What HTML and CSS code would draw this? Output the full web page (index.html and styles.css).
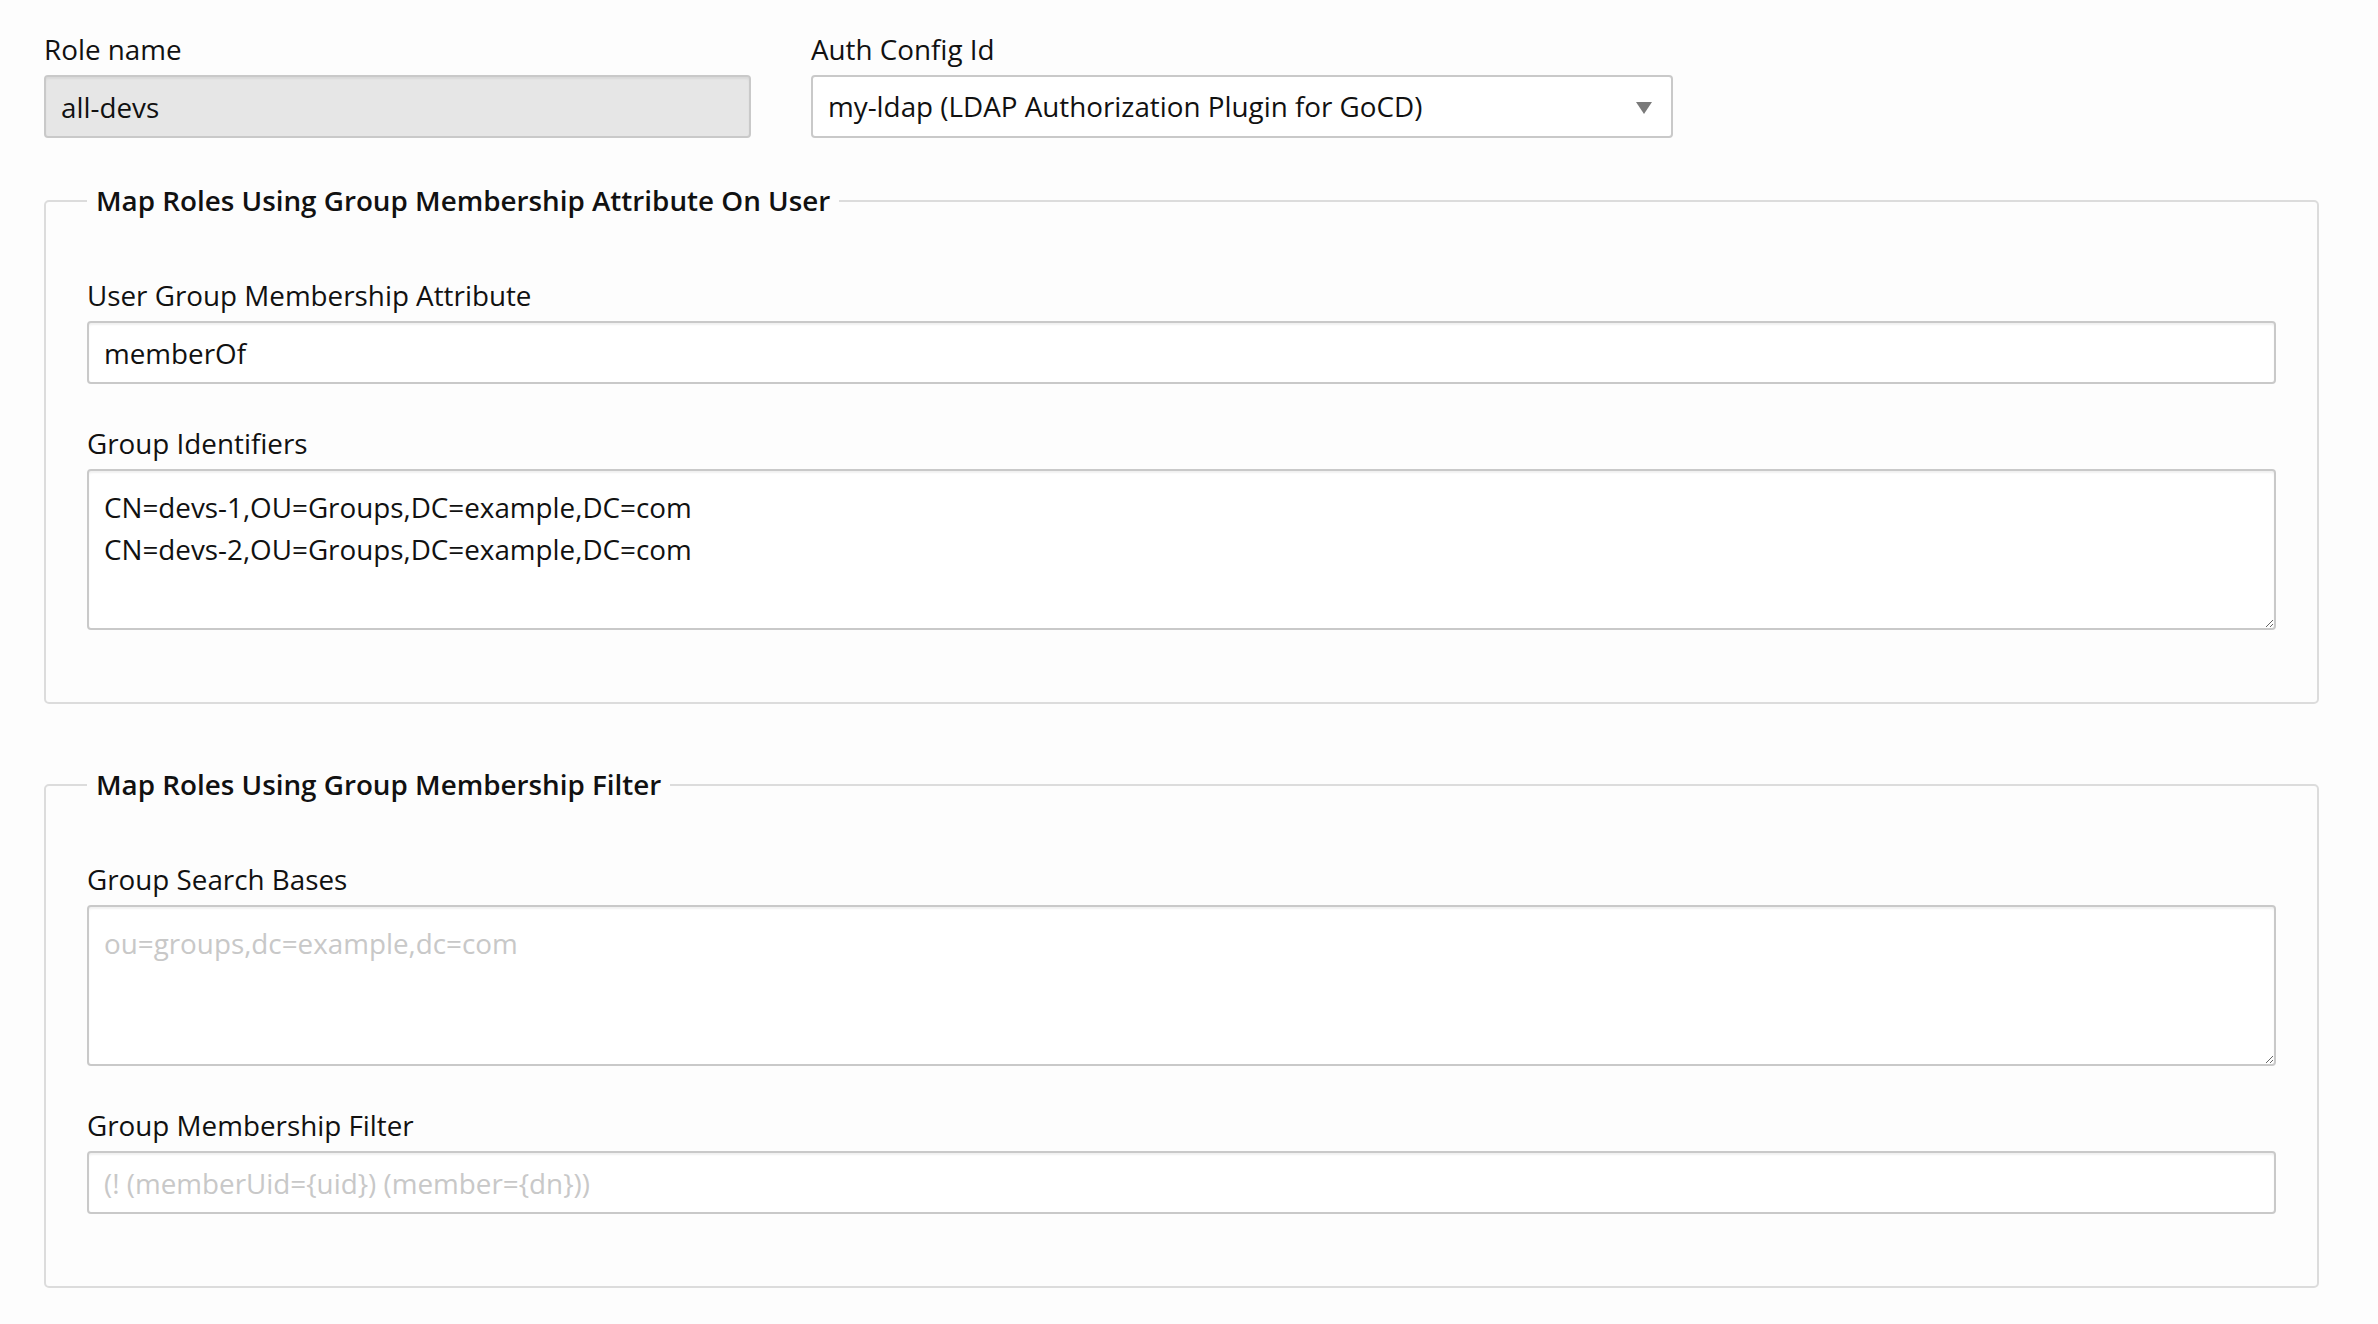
FILE: index.html
```html
<!DOCTYPE html>
<html>
<head>
<meta charset="utf-8">
<link rel="stylesheet" href="styles.css">
</head>
<body>
<div class="page">
  <div class="top-row">
    <div class="form-group col-role">
      <label class="lbl">Role name</label>
      <input class="ctl ctl-disabled" type="text" value="all-devs" disabled>
    </div>
    <div class="form-group col-auth">
      <label class="lbl">Auth Config Id</label>
      <div class="select">
        <span class="select-text">my-ldap (LDAP Authorization Plugin for GoCD)</span>
        <span class="select-arrow"></span>
      </div>
    </div>
  </div>

  <fieldset class="box">
    <legend class="box-title">Map Roles Using Group Membership Attribute On User</legend>
    <div class="form-group">
      <label class="lbl">User Group Membership Attribute</label>
      <input class="ctl" type="text" value="memberOf">
    </div>
    <div class="form-group last">
      <label class="lbl">Group Identifiers</label>
      <textarea class="ctl area">CN=devs-1,OU=Groups,DC=example,DC=com
CN=devs-2,OU=Groups,DC=example,DC=com</textarea>
    </div>
  </fieldset>

  <fieldset class="box second">
    <legend class="box-title">Map Roles Using Group Membership Filter</legend>
    <div class="form-group">
      <label class="lbl">Group Search Bases</label>
      <textarea class="ctl area" placeholder="ou=groups,dc=example,dc=com"></textarea>
    </div>
    <div class="form-group last">
      <label class="lbl">Group Membership Filter</label>
      <input class="ctl" type="text" placeholder="(! (memberUid={uid}) (member={dn}))">
    </div>
  </fieldset>
</div>
</body>
</html>
```

FILE: styles.css
```css
* { box-sizing: border-box; }
html, body {
  margin: 0;
  padding: 0;
  background: #fdfdfd;
}
body {
  font-family: "Open Sans", "Noto Sans", sans-serif;
  font-size: 27.8px;
  line-height: 39px;
  color: #111;
}
.page {
  padding: 30px 59px 40px 44px;
}
.top-row {
  display: flex;
  gap: 60px;
  margin-bottom: 43px;
}
.col-role { width: 707px; }
.col-auth { width: 862px; }
.form-group {
  display: flex;
  flex-direction: column;
  margin-bottom: 40px;
}
.top-row .form-group { margin-bottom: 0; }
.form-group.last { margin-bottom: 0; }
.lbl {
  display: block;
  margin-bottom: 6px;
}
.ctl {
  display: block;
  width: 100%;
  height: 63px;
  padding: 10px 15px;
  font-family: inherit;
  font-size: 27.8px;
  line-height: 39px;
  color: #111;
  background: #fff;
  border: 2px solid #c9c9c9;
  border-radius: 4px;
  box-shadow: inset 0 2px 2px rgba(0,0,0,0.06);
  outline: none;
}
.ctl::placeholder { color: #c8c8c8; }
.ctl-disabled {
  background: #e6e6e6;
  color: #111;
  -webkit-text-fill-color: #111;
  opacity: 1;
}
.area {
  height: 161px;
  padding-top: 15px;
  resize: vertical;
  line-height: 42px;
}
.select {
  position: relative;
  display: flex;
  align-items: center;
  height: 63px;
  padding: 10px 15px;
  background: #fff;
  border: 2px solid #c9c9c9;
  border-radius: 4px;
}
.select-arrow {
  position: absolute;
  right: 19px;
  top: 25px;
  width: 0;
  height: 0;
  border-left: 8px solid transparent;
  border-right: 8px solid transparent;
  border-top: 12px solid #7a7a7a;
}
.box {
  margin: 0;
  padding: 56px 41px 72px 41px;
  border: 2px solid #dcdcdc;
  border-radius: 5px;
  min-width: 0;
}
.box.second { margin-top: 61px; }
.box-title {
  font-weight: 600;
  padding: 0 9px;
  margin-left: 0;
}
```
